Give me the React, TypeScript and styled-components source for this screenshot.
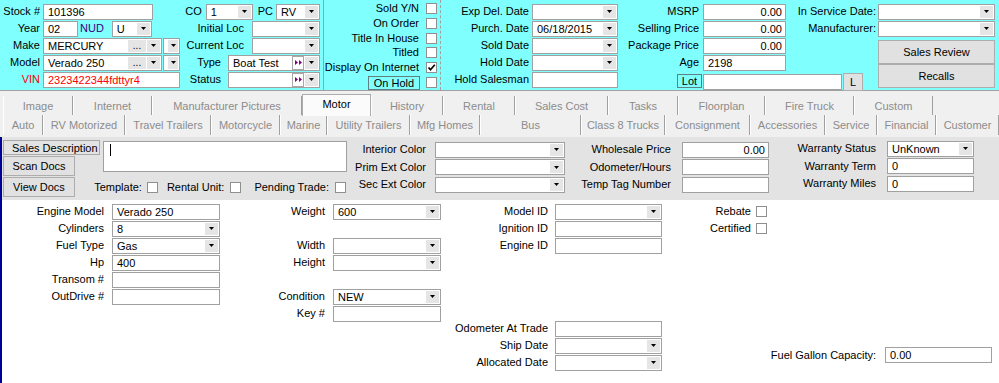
import React from 'react'
import styled, { createGlobalStyle } from 'styled-components'

const LookAndFeel = createGlobalStyle`
  html, body { margin: 0; padding: 0; background: #ffffff; }
  body { font-family: "Liberation Sans", Arial, sans-serif; font-size: 11px; color: #000; }
`

const Screen = styled.div`
  width: 999px;
  height: 383px;
  overflow: hidden;
  display: flex;
  flex-direction: column;
`

/* ---------- shared controls ---------- */

const Label = styled.span<{ $color?: string }>`
  white-space: nowrap;
  color: ${p => p.$color ?? '#000'};
  justify-self: end;
  line-height: 13px;
`

const Box = styled.div<{ $w: number; $color?: string; $right?: boolean }>`
  box-sizing: border-box;
  width: ${p => p.$w}px;
  height: 16px;
  display: flex;
  align-items: center;
  justify-content: ${p => (p.$right ? 'flex-end' : 'flex-start')};
  padding: 0 3px 0 4px;
  background: #fff;
  border: 1px solid #a0a0a0;
  color: ${p => p.$color ?? '#000'};
  white-space: nowrap;
  overflow: hidden;
  justify-self: start;
`

const ComboShell = styled(Box)`
  padding-right: 0;
`

const ComboText = styled.span`
  flex: 1;
  overflow: hidden;
`

const SideButton = styled.div<{ $w: number }>`
  width: ${p => p.$w}px;
  align-self: stretch;
  margin: 1px 1px 1px 0;
  background: #e5e5e5;
  display: flex;
  align-items: center;
  justify-content: center;
  font-size: 10px;
  line-height: 8px;
`

const JumpButton = styled.div`
  box-sizing: border-box;
  width: 12px;
  align-self: stretch;
  margin: 0 1px 0 0;
  background: #fff;
  border: 1px solid #a8a8a8;
  display: flex;
  align-items: center;
  justify-content: center;
`

const Arrow = () => (
  <svg width="5" height="3" viewBox="0 0 5 3">
    <polygon points="0,0 5,0 2.5,3" fill="#000" />
  </svg>
)

const Combo = ({ w, value, ellipsis, jump }: { w: number; value?: string; ellipsis?: boolean; jump?: boolean }) => (
  <ComboShell $w={w}>
    <ComboText>{value}</ComboText>
    {ellipsis && <SideButton $w={18}>...</SideButton>}
    {jump && (
      <JumpButton>
        <svg width="7" height="5" viewBox="0 0 7 5">
          <polygon points="0,0 3,2.5 0,5" fill="#800080" />
          <polygon points="4,0 7,2.5 4,5" fill="#800080" />
        </svg>
      </JumpButton>
    )}
    <SideButton $w={13}>
      <Arrow />
    </SideButton>
  </ComboShell>
)

const CheckSquare = styled.div`
  box-sizing: border-box;
  width: 11px;
  height: 11px;
  background: #fff;
  border: 1px solid #8e8f8f;
  display: flex;
  align-items: center;
  justify-content: center;
  flex: none;
  justify-self: start;
`

const Check = ({ on }: { on?: boolean }) => (
  <CheckSquare>
    {on && (
      <svg width="9" height="9" viewBox="0 0 9 9">
        <path d="M1.5 4.5 L3.5 6.8 L7.8 1.8" stroke="#000" strokeWidth="1.7" fill="none" />
      </svg>
    )}
  </CheckSquare>
)

const PushButton = styled.div<{ $w: number; $h: number }>`
  box-sizing: border-box;
  width: ${p => p.$w}px;
  height: ${p => p.$h}px;
  background: #e1e1e1;
  border: 1px solid #adadad;
  display: flex;
  align-items: center;
  justify-content: center;
  white-space: nowrap;
`

const Tag = styled.div<{ $w: number }>`
  box-sizing: border-box;
  width: ${p => p.$w}px;
  height: 14px;
  border: 1px solid #5f8080;
  display: flex;
  align-items: center;
  justify-content: center;
  justify-self: end;
  align-self: end;
`

const FieldGrid = styled.div<{ $cols: string; $gap: number; $row?: number }>`
  display: grid;
  grid-template-columns: ${p => p.$cols};
  grid-auto-rows: ${p => p.$row ?? 17}px;
  column-gap: ${p => p.$gap}px;
  align-items: center;
  align-content: start;
`

const Line = styled.div<{ $gap?: number; $end?: boolean; $h?: number }>`
  display: flex;
  align-items: center;
  gap: ${p => p.$gap ?? 0}px;
  justify-content: ${p => (p.$end ? 'flex-end' : 'flex-start')};
  height: ${p => (p.$h ? `${p.$h}px` : 'auto')};
`

/* ---------- header (cyan) ---------- */

const Header = styled.div`
  display: flex;
  height: 90px;
  background: #80ffff;
  border-bottom: 1px solid #a0a0a0;
  flex: none;
`

const HeadCol = styled.div<{ $w: number; $edge?: 'solid' | 'dashed'; $top?: number }>`
  box-sizing: border-box;
  width: ${p => p.$w}px;
  flex: none;
  padding-top: ${p => p.$top ?? 3}px;
  border-left: ${p => (p.$edge ? `1px ${p.$edge} #a0a0a0` : 'none')};
`

const ListCol = styled(HeadCol)`
  display: flex;
  flex-direction: column;
  padding-right: 3px;
`

const ButtonStack = styled.div`
  grid-column: 4;
  grid-row: 3 / span 3;
  align-self: stretch;
  justify-self: end;
  padding-top: 3px;
  display: flex;
  flex-direction: column;
`

const LotLine = styled.div`
  grid-column: 2 / span 2;
  display: flex;
  align-items: center;
  padding-left: 3px;
  gap: 1px;
  align-self: start;
  padding-top: 2px;
`

/* ---------- tabs ---------- */

const TabStrip = styled.div`
  height: 46px;
  background: #f0f0f0;
  padding-left: 3px;
  flex: none;
  display: flex;
  flex-direction: column;
`

const TabRow = styled.div<{ $top: number; $h: number }>`
  display: flex;
  margin-top: ${p => p.$top}px;
  height: ${p => p.$h}px;
`

const Tab = styled.div<{ $w: number; $active?: boolean }>`
  box-sizing: border-box;
  width: ${p => p.$w}px;
  flex: none;
  display: flex;
  align-items: center;
  justify-content: center;
  white-space: nowrap;
  color: ${p => (p.$active ? '#000' : '#8c8c8c')};
  border-left: 1px solid #ffffff;
  border-right: 1px solid #a0a0a0;
  ${p =>
    p.$active &&
    `
    background: #fbfbfb;
    border: 1px solid #acacac;
    border-bottom: none;
    margin-top: -2px;
    height: calc(100% + 3px);
    padding-bottom: 4px;
    position: relative;
    z-index: 1;
  `}
`

/* ---------- content ---------- */

const Content = styled.div`
  flex: 1;
  display: flex;
  flex-direction: column;
  border-left: 2px solid #000099;
`

const GreyPanel = styled.div`
  height: 63px;
  flex: none;
  background: #e3e3e3;
  display: flex;
  padding: 3px 0 0 1px;
  box-sizing: border-box;
`

const DescGroup = styled.div`
  display: grid;
  grid-template-columns: 72px 25px 247px;
  grid-template-rows: 16px 21px 21px;
`

const DescButton = styled(PushButton)`
  grid-column: 1 / 3;
  justify-content: flex-start;
  padding-left: 8px;
  overflow: hidden;
  background: #e3e3e3;
  border-color: #a9a9a9;
`

const Memo = styled.div`
  grid-column: 3;
  grid-row: 1 / 3;
  box-sizing: border-box;
  width: 244px;
  height: 31px;
  margin: 1px 0 0 3px;
  background: #fff;
  border: 1px solid #a0a0a0;
  padding: 2px 0 0 6px;
`

const Caret = styled.div`
  width: 1px;
  height: 12px;
  background: #000;
`

const FlagRow = styled.div`
  grid-column: 2 / 4;
  grid-row: 3;
  display: flex;
  align-items: center;
  justify-content: flex-end;
  padding-right: 1px;
`

const Flag = styled.div<{ $gap: number; $next: number }>`
  display: flex;
  align-items: center;
  gap: ${p => p.$gap}px;
  margin-right: ${p => p.$next}px;
`

const WhitePanel = styled.div`
  flex: 1;
  display: flex;
  background: #fff;
  padding-top: 3px;
`

const Stack = styled.div`
  display: flex;
  flex-direction: column;
`

const FuelBlock = styled.div`
  flex: 1;
  display: flex;
  align-items: flex-end;
  justify-content: flex-end;
  gap: 9px;
  padding: 0 7px 20px 0;
`

const topTabs: [string, number][] = [
  ['Image', 70], ['Internet', 79], ['Manufacturer Pictures', 150], ['Motor', 69], ['History', 72],
  ['Rental', 72], ['Sales Cost', 93], ['Tasks', 70], ['Floorplan', 87], ['Fire Truck', 89], ['Custom', 79],
]

const lowTabs: [string, number][] = [
  ['Auto', 40], ['RV Motorized', 82], ['Travel Trailers', 86], ['Motorcycle', 69], ['Marine', 47],
  ['Utility Trailers', 83], ['Mfg Homes', 70], ['Bus', 101], ['Class 8 Trucks', 84], ['Consignment', 85],
  ['Accessories', 75], ['Service', 52], ['Financial', 59], ['Customer', 63],
]

const App = () => {
  return (
    <Screen>
      <LookAndFeel />
      <Header>
        <HeadCol $w={180}>
          <FieldGrid $cols="40px 1fr" $gap={3}>
            <Label>Stock #</Label>
            <Box $w={110}>101396</Box>
            <Label>Year</Label>
            <Line>
              <Box $w={35}>02</Box>
              <Label $color="#400080" style={{ margin: '0 8px 0 2px' }}>NUD</Label>
              <Combo w={40} value="U" />
            </Line>
            <Label>Make</Label>
            <Line $gap={1}>
              <Combo w={119} value="MERCURY" ellipsis />
              <Combo w={17} />
            </Line>
            <Label>Model</Label>
            <Line $gap={1}>
              <Combo w={119} value="Verado 250" ellipsis />
              <Combo w={17} />
            </Line>
            <Label $color="#ff0000">VIN</Label>
            <Box $w={137} $color="#ff0000">2323422344fdttyr4</Box>
          </FieldGrid>
        </HeadCol>

        <ListCol $w={143}>
          <Line $end $h={17}>
            <Label>CO</Label>
            <span style={{ width: 4 }} />
            <Combo w={47} value="1" />
            <span style={{ width: 5 }} />
            <Label>PC</Label>
            <span style={{ width: 3 }} />
            <Combo w={44} value="RV" />
          </Line>
          <Line $end $h={17} $gap={8}>
            <Label>Initial Loc</Label>
            <Combo w={68} />
          </Line>
          <Line $end $h={17} $gap={8}>
            <Label>Current Loc</Label>
            <Combo w={68} />
          </Line>
          <Line $end $h={17} $gap={7}>
            <Label>Type</Label>
            <Combo w={92} value="Boat Test" jump />
          </Line>
          <Line $end $h={17} $gap={7}>
            <Label>Status</Label>
            <Combo w={92} jump />
          </Line>
        </ListCol>

        <ListCol $w={117} $edge="solid" $top={1}>
          <Line $end $h={15} $gap={7}><Label>Sold Y/N</Label><Check /></Line>
          <Line $end $h={15} $gap={7}><Label>On Order</Label><Check /></Line>
          <Line $end $h={15} $gap={7}><Label>Title In House</Label><Check /></Line>
          <Line $end $h={15} $gap={7}><Label>Titled</Label><Check /></Line>
          <Line $end $h={15} $gap={7}><Label>Display On Internet</Label><Check on /></Line>
          <Line $end $h={15} $gap={6}><Tag $w={52}>On Hold</Tag><Check /></Line>
        </ListCol>

        <HeadCol $w={180} $edge="dashed">
          <FieldGrid $cols="88px 86px" $gap={3}>
            <Label>Exp Del. Date</Label>
            <Combo w={86} />
            <Label>Purch. Date</Label>
            <Combo w={86} value="06/18/2015" />
            <Label>Sold Date</Label>
            <Combo w={86} />
            <Label>Hold Date</Label>
            <Combo w={86} />
            <Label>Hold Salesman</Label>
            <Box $w={86} />
          </FieldGrid>
        </HeadCol>

        <HeadCol $w={379}>
          <FieldGrid $cols="80px 86px 90px 119px" $gap={0}>
            <Label style={{ paddingRight: 1 }}>MSRP</Label>
            <Box $w={83} $right style={{ justifySelf: 'end' }}>0.00</Box>
            <Label>In Service Date:</Label>
            <div style={{ justifySelf: 'end' }}><Combo w={117} /></div>

            <Label style={{ paddingRight: 1 }}>Selling Price</Label>
            <Box $w={83} $right style={{ justifySelf: 'end' }}>0.00</Box>
            <Label>Manufacturer:</Label>
            <div style={{ justifySelf: 'end' }}><Combo w={117} /></div>

            <Label style={{ paddingRight: 1 }}>Package Price</Label>
            <Box $w={83} $right style={{ justifySelf: 'end' }}>0.00</Box>
            <span />
            <ButtonStack>
              <PushButton $w={117} $h={24}>Sales Review</PushButton>
              <PushButton $w={117} $h={24}>Recalls</PushButton>
            </ButtonStack>

            <Label style={{ paddingRight: 1 }}>Age</Label>
            <Box $w={83} style={{ justifySelf: 'end' }}>2198</Box>
            <span />

            <Tag $w={25} style={{ marginRight: -2 }}>Lot</Tag>
            <LotLine>
              <Box $w={139} />
              <PushButton $w={20} $h={18}>L</PushButton>
            </LotLine>
          </FieldGrid>
        </HeadCol>
      </Header>

      <TabStrip>
        <TabRow $top={5} $h={19}>
          {topTabs.map(([name, w]) => (
            <Tab key={name} $w={w} $active={name === 'Motor'}>{name}</Tab>
          ))}
        </TabRow>
        <TabRow $top={0} $h={20}>
          {lowTabs.map(([name, w]) => (
            <Tab key={name} $w={w}>{name}</Tab>
          ))}
        </TabRow>
      </TabStrip>

      <Content>
        <GreyPanel>
          <DescGroup>
            <DescButton $w={97} $h={15}>Sales Description</DescButton>
            <Memo><Caret /></Memo>
            <PushButton $w={72} $h={20} style={{ gridRow: 2, alignSelf: 'start' }}>Scan Docs</PushButton>
            <PushButton $w={72} $h={20} style={{ gridRow: 3, alignSelf: 'start' }}>View Docs</PushButton>
            <FlagRow>
              <Flag $gap={5} $next={9}><Label>Template:</Label><Check /></Flag>
              <Flag $gap={6} $next={13}><Label>Rental Unit:</Label><Check /></Flag>
              <Flag $gap={6} $next={0}><Label>Pending Trade:</Label><Check /></Flag>
            </FlagRow>
          </DescGroup>

          <FieldGrid $cols="79px 130px" $gap={9} $row={17.5} style={{ marginTop: 1 }}>
            <Label>Interior Color</Label>
            <Combo w={130} />
            <Label>Prim Ext Color</Label>
            <Combo w={130} />
            <Label>Sec Ext Color</Label>
            <Combo w={130} />
          </FieldGrid>

          <FieldGrid $cols="106px 87px" $gap={11} $row={17.5} style={{ marginTop: 1 }}>
            <Label>Wholesale Price</Label>
            <Box $w={87} $right>0.00</Box>
            <Label>Odometer/Hours</Label>
            <Box $w={87} />
            <Label>Temp Tag Number</Label>
            <Box $w={87} />
          </FieldGrid>

          <FieldGrid $cols="107px 87px" $gap={11} $row={17.5}>
            <Label>Warranty Status</Label>
            <Combo w={87} value="UnKnown" />
            <Label>Warranty Term</Label>
            <Box $w={87}>0</Box>
            <Label>Warranty Miles</Label>
            <Box $w={87}>0</Box>
          </FieldGrid>
        </GreyPanel>

        <WhitePanel>
          <FieldGrid $cols="102px 108px" $gap={8}>
            <Label>Engine Model</Label>
            <Box $w={108}>Verado 250</Box>
            <Label>Cylinders</Label>
            <Combo w={108} value="8" />
            <Label>Fuel Type</Label>
            <Combo w={108} value="Gas" />
            <Label>Hp</Label>
            <Box $w={108}>400</Box>
            <Label>Transom #</Label>
            <Box $w={108} />
            <Label>OutDrive #</Label>
            <Box $w={108} />
          </FieldGrid>

          <FieldGrid $cols="105px 108px" $gap={8}>
            <Label>Weight</Label>
            <Combo w={108} value="600" />
            <span /><span />
            <Label>Width</Label>
            <Combo w={108} />
            <Label>Height</Label>
            <Combo w={108} />
            <span /><span />
            <Label>Condition</Label>
            <Combo w={108} value="NEW" />
            <Label>Key #</Label>
            <Box $w={108} />
          </FieldGrid>

          <Stack>
            <FieldGrid $cols="107px 107px" $gap={7}>
              <Label>Model ID</Label>
              <Combo w={107} />
              <Label>Ignition ID</Label>
              <Box $w={107} />
              <Label>Engine ID</Label>
              <Box $w={107} />
            </FieldGrid>
            <FieldGrid $cols="107px 107px" $gap={7} style={{ marginTop: 66 }}>
              <Label>Odometer At Trade</Label>
              <Box $w={107} />
              <Label>Ship Date</Label>
              <Combo w={107} />
              <Label>Allocated Date</Label>
              <Combo w={107} />
            </FieldGrid>
          </Stack>

          <FieldGrid $cols="89px 11px" $gap={5}>
            <Label>Rebate</Label>
            <Check />
            <Label>Certified</Label>
            <Check />
          </FieldGrid>

          <FuelBlock>
            <Label style={{ lineHeight: '16px' }}>Fuel Gallon Capacity:</Label>
            <Box $w={107}>0.00</Box>
          </FuelBlock>
        </WhitePanel>
      </Content>
    </Screen>
  )
}

export default App
